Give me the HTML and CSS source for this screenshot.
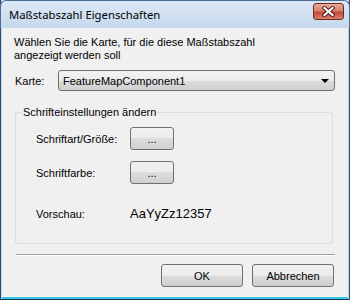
FILE: index.html
```html
<!DOCTYPE html>
<html lang="de">
<head>
  <meta charset="UTF-8" />
  <title>Maßstabszahl Eigenschaften</title>
  <link rel="stylesheet" href="styles.css">
</head>
<body>
  <div class="window">
    <div class="titlebar">
      <span class="title">Maßstabszahl Eigenschaften</span>
      <button class="close" title="Schließen">
        <svg width="13" height="11" viewBox="0 0 13 11">
          <path d="M2.5 2 L10.5 9 M10.5 2 L2.5 9" stroke="#4a1c12" stroke-width="4" stroke-linecap="square"/>
          <path d="M2.5 2 L10.5 9 M10.5 2 L2.5 9" stroke="#fff" stroke-width="2.2" stroke-linecap="square"/>
        </svg>
      </button>
    </div>

    <div class="content">
      <p class="intro">Wählen Sie die Karte, für die diese Maßstabszahl<br>angezeigt werden soll</p>

      <div class="map-row">
        <label class="map-label">Karte:</label>
        <div class="combo">
          <span>FeatureMapComponent1</span>
          <span class="arrow"></span>
        </div>
      </div>

      <fieldset class="group">
        <legend>Schrifteinstellungen ändern</legend>

        <div class="row">
          <span class="row-label">Schriftart/Größe:</span>
          <button class="btn small">...</button>
        </div>
        <div class="row">
          <span class="row-label">Schriftfarbe:</span>
          <button class="btn small">...</button>
        </div>
        <div class="row preview-row">
          <span class="row-label">Vorschau:</span>
          <span class="preview">AaYyZz12357</span>
        </div>
      </fieldset>

      <div class="separator"></div>

      <div class="actions">
        <button class="btn wide">OK</button>
        <button class="btn wide">Abbrechen</button>
      </div>
    </div>
  </div>
</body>
</html>
```

FILE: styles.css
```css
body {
  margin: 0;
  font-family: 'Liberation Sans', Arial, sans-serif;
  font-size: 11px;
  color: #000;
}

.window {
  width: 350px;
  height: 300px;
  box-sizing: border-box;
  background-color: #f0f0f0;
  overflow: hidden;
  box-shadow:
    inset 1px 0 #2e4e74,
    inset -1px 0 #2e4e74,
    inset 0 -1px #1c3450,
    inset 2px 0 #b9d3ee,
    inset -2px 0 #b9d3ee,
    inset 0 -3px #36c6ec;
}

.titlebar {
  height: 28px;
  display: flex;
  justify-content: space-between;
  align-items: flex-start;
  padding: 0 5px 0 8px;
  background: linear-gradient(#dce8f6, #c6d8ee);
  border-top: 1px solid #4a6a90;
  border-left: 1px solid #4a6a90;
  border-right: 1px solid #4a6a90;
  border-radius: 6px 6px 0 0;
  box-sizing: border-box;
}

.title {
  font-family: 'Noto Sans', sans-serif;
  font-size: 11.3px;
  line-height: 16px;
  margin-top: 6px;
  color: #000;
}

.close {
  width: 31px;
  height: 17px;
  margin-top: 2px;
  padding: 0;
  border: 1px solid #6e2c22;
  border-radius: 3px;
  background: linear-gradient(#eaaa9c, #d88070 45%, #c54a36 55%, #d9806c);
  display: flex;
  align-items: center;
  justify-content: center;
}

.content {
  padding: 0 15px;
}

.intro {
  margin: 8px 0 0 -1px;
  line-height: 13px;
}

.map-row {
  display: flex;
  align-items: center;
  margin-top: 8px;
}

.map-label {
  width: 43px;
}

.combo {
  flex: 1;
  height: 21px;
  box-sizing: border-box;
  border: 1px solid #707070;
  border-radius: 3px;
  background: linear-gradient(#f3f3f3, #ebebeb 50%, #dddddd 50%, #cfcfcf);
  display: flex;
  align-items: center;
  justify-content: space-between;
  padding: 0 4px 0 4px;
}

.arrow {
  width: 0;
  height: 0;
  border-left: 4px solid transparent;
  border-right: 4px solid transparent;
  border-top: 4px solid #000;
  margin-right: 1px;
}

.group {
  margin: 15px 2px 0 0;
  padding: 8px 0 18px 20px;
  border: 1px solid #d5dfe5;
  border-radius: 3px;
}

.group legend {
  margin-left: -14px;
  padding: 0 1px;
  line-height: 13px;
}

.row {
  display: flex;
  align-items: center;
  height: 23px;
}

.row + .row {
  margin-top: 11px;
}

.preview-row {
  margin-top: 18px !important;
}

.row-label {
  width: 94px;
}

.preview {
  font-size: 13px;
}

.btn {
  font-family: 'Liberation Sans', Arial, sans-serif;
  font-size: 11px;
  color: #000;
  height: 23px;
  padding: 0;
  border: 1px solid #707070;
  border-radius: 3px;
  background: linear-gradient(#f2f2f2, #ebebeb 50%, #dddddd 50%, #cfcfcf);
}

.small {
  width: 44px;
}

.wide {
  width: 82px;
}

.separator {
  margin: 10px 0 0 1px;
  border-top: 1px solid #a0a0a0;
  border-bottom: 1px solid #fff;
}

.actions {
  display: flex;
  justify-content: flex-end;
  gap: 9px;
  margin: 8px 1px 0 0;
}
```
